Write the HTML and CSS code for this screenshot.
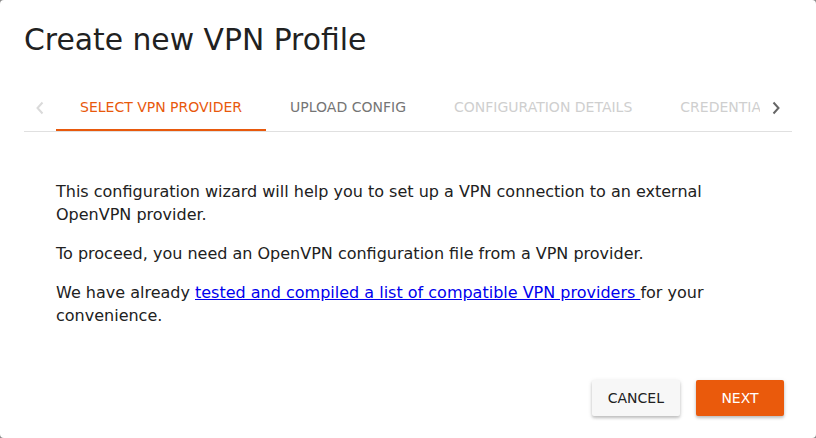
FILE: index.html
```html
<!DOCTYPE html>
<html lang="en">
<head>
<meta charset="utf-8">
<title>Create new VPN Profile</title>
<link rel="stylesheet" href="styles.css">
</head>
<body>
<div class="dialog">
  <h1 class="title">Create new VPN Profile</h1>
  <div class="tabs">
    <button class="arrow arrow-left" aria-label="previous">
      <svg width="10" height="14" viewBox="0 0 10 14"><path d="M7.5 1.5 L2.5 7 L7.5 12.5" fill="none" stroke="currentColor" stroke-width="2"/></svg>
    </button>
    <div class="tab-strip">
      <div class="tab active">Select VPN Provider</div>
      <div class="tab">Upload Config</div>
      <div class="tab disabled">Configuration Details</div>
      <div class="tab disabled">Credentials</div>
    </div>
    <button class="arrow arrow-right" aria-label="next">
      <svg width="10" height="14" viewBox="0 0 10 14"><path d="M2.5 1.5 L7.5 7 L2.5 12.5" fill="none" stroke="currentColor" stroke-width="2"/></svg>
    </button>
  </div>
  <div class="content">
    <p>This configuration wizard will help you to set up a VPN connection to an external OpenVPN provider.</p>
    <p>To proceed, you need an OpenVPN configuration file from a VPN provider.</p>
    <p>We have already <a href="#">tested and compiled a list of compatible VPN providers </a>for your convenience.</p>
  </div>
  <div class="actions">
    <button class="btn btn-cancel">Cancel</button>
    <button class="btn btn-next">Next</button>
  </div>
</div>
</body>
</html>
```
FILE: styles.css
```css
html, body {
  margin: 0;
  padding: 0;
  background: #8a8a8a;
  height: 100%;
}
body {
  font-family: "DejaVu Sans", sans-serif;
  color: #212121;
}
.dialog {
  width: 816px;
  height: 438px;
  box-sizing: border-box;
  background: #fff;
  border-radius: 4px;
  padding: 0 24px;
  display: flex;
  flex-direction: column;
  overflow: hidden;
}
.title {
  margin: 0;
  padding-top: 22px;
  font-size: 29.8px;
  font-weight: normal;
  line-height: 36px;
  color: #212121;
}
.tabs {
  margin-top: 31px;
  display: flex;
  align-items: stretch;
  height: 42px;
  border-bottom: 1px solid #e0e0e0;
}
.arrow {
  width: 32px;
  flex: none;
  border: 0;
  background: none;
  padding: 0 0 5px;
  display: flex;
  align-items: center;
  justify-content: center;
  color: #dadada;
}
.arrow-right {
  color: #666;
}
.tab-strip {
  flex: 1;
  display: flex;
  overflow: hidden;
  white-space: nowrap;
}
.tab {
  flex: none;
  padding: 0 24px 5px;
  display: flex;
  align-items: center;
  font-size: 14px;
  text-transform: uppercase;
  color: #757575;
  box-sizing: border-box;
  border-bottom: 2px solid transparent;
}
.tab.active {
  color: #e8590c;
  border-bottom-color: #e8590c;
}
.tab.disabled {
  color: #cfcfcf;
}
.content {
  padding: 48px 32px 0;
  font-size: 16px;
  line-height: 23px;
}
.content p {
  margin: 0 0 16px;
}
.content a {
  color: #0000ee;
}
.actions {
  margin-top: auto;
  display: flex;
  justify-content: flex-end;
  gap: 16px;
  padding: 0 8px 22px 0;
}
.btn {
  height: 36px;
  min-width: 88px;
  padding: 0 16px;
  border: 0;
  border-radius: 2px;
  font-family: "DejaVu Sans", sans-serif;
  font-size: 14px;
  text-transform: uppercase;
  box-shadow: 0 2px 3px rgba(0,0,0,0.2), 0 1px 5px rgba(0,0,0,0.1);
}
.btn-cancel {
  background: #f7f7f7;
  color: #212121;
}
.btn-next {
  background: #ea5a0c;
  color: #fff;
}
```
